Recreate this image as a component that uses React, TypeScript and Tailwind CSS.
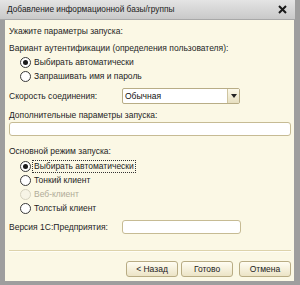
import React from 'react';

const Radio = ({ label, checked, disabled, focused }: { label: string; checked?: boolean; disabled?: boolean; focused?: boolean }) => {
  return (
    <div className="flex items-center h-[14px] pl-[11px]">
      <span
        className={`w-[11px] h-[11px] rounded-full border flex items-center justify-center ${
          disabled ? 'border-[#d6d2c0] bg-[#f7f4e6]' : 'border-[#3a3a3a] bg-white'
        }`}
      >
        {checked && <span className="w-[5px] h-[5px] rounded-full bg-[#1a1a1a]" />}
      </span>
      <span
        className={`ml-[1px] px-[1px] leading-[11px] ${
          focused ? 'border border-dotted border-[#333]' : 'border border-transparent'
        } ${disabled ? 'text-[#b0ab98]' : 'text-[#1e1e1e]'}`}
      >
        {label}
      </span>
    </div>
  );
};

const Button = ({ label }: { label: string }) => {
  return (
    <div className="w-[52px] h-[16px] rounded-[3px] border border-[#b8ac84] bg-gradient-to-b from-[#fffdf2] to-[#ece4c6] flex items-center justify-center text-[#222]">
      {label}
    </div>
  );
};

export default function App() {
  return (
    <div
      className="w-[300px] h-[285px] bg-[#9e9e9e] flex flex-col text-[8.5px] overflow-hidden"
      style={{ fontFamily: '"Liberation Sans", Arial, sans-serif' }}
    >
      {/* Заголовок окна */}
      <div className="h-[20px] flex items-center justify-between pl-[7px] pr-[8px] bg-gradient-to-b from-[#e4e4e4] to-[#c9c9c9] border-b border-[#a8a8a8] mr-[5px]">
        <span className="text-[#1c1c1c] text-[8.3px]">Добавление информационной базы/группы</span>
        <svg width="9" height="9" viewBox="0 0 9 9">
          <path d="M1 1 L8 8 M8 1 L1 8" stroke="#1a1a1a" strokeWidth="2" />
        </svg>
      </div>

      <div className="flex flex-1 pl-[5px] pr-[6px] pb-[4px]">
        <div className="flex-1 bg-[#fbf8e5] pl-[4px] pr-[3px] flex flex-col text-[#1e1e1e]">
          <div className="h-[14px] mt-[4px] flex items-center">Укажите параметры запуска:</div>
          <div className="h-[13px] mt-[4px] flex items-center">Вариант аутентификации (определения пользователя):</div>
          <Radio label="Выбирать автоматически" checked />
          <Radio label="Запрашивать имя и пароль" />

          <div className="h-[16px] mt-[5px] flex items-center">
            <span className="w-[113px]">Скорость соединения:</span>
            <div className="w-[118px] h-[16px] border border-[#b8ad86] rounded-[2px] bg-white flex items-center">
              <span className="flex-1 pl-[2px] text-[#111]">Обычная</span>
              <div className="w-[12px] h-[14px] bg-gradient-to-b from-[#fcf9ea] to-[#e7dfc0] border-l border-[#cfc5a0] flex items-center justify-center">
                <svg width="6" height="4" viewBox="0 0 6 4">
                  <path d="M0 0 H6 L3 4 Z" fill="#222" />
                </svg>
              </div>
            </div>
          </div>

          <div className="h-[14px] mt-[4px] flex items-center">Дополнительные параметры запуска:</div>
          <div className="h-[14px] border border-[#c6bb94] rounded-[3px] bg-white" />

          <div className="h-[14px] mt-[8px] flex items-center">Основной режим запуска:</div>
          <div className="mt-[1px]">
            <Radio label="Выбирать автоматически" checked focused />
            <Radio label="Тонкий клиент" />
            <Radio label="Веб-клиент" disabled />
            <Radio label="Толстый клиент" />
          </div>

          <div className="h-[14px] mt-[5px] flex items-center">
            <span className="w-[113px]">Версия 1С:Предприятия:</span>
            <div className="w-[119px] h-[14px] border border-[#c6bb94] rounded-[3px] bg-white" />
          </div>

          <div className="mt-[16px] border-t border-[#ddd3ab] border-b border-b-[#fffef6]" />

          <div className="mt-[9px] flex justify-end">
            <Button label="< Назад" />
            <div className="ml-[3px]">
              <Button label="Готово" />
            </div>
            <div className="ml-[6px]">
              <Button label="Отмена" />
            </div>
          </div>
        </div>
      </div>
    </div>
  );
}
